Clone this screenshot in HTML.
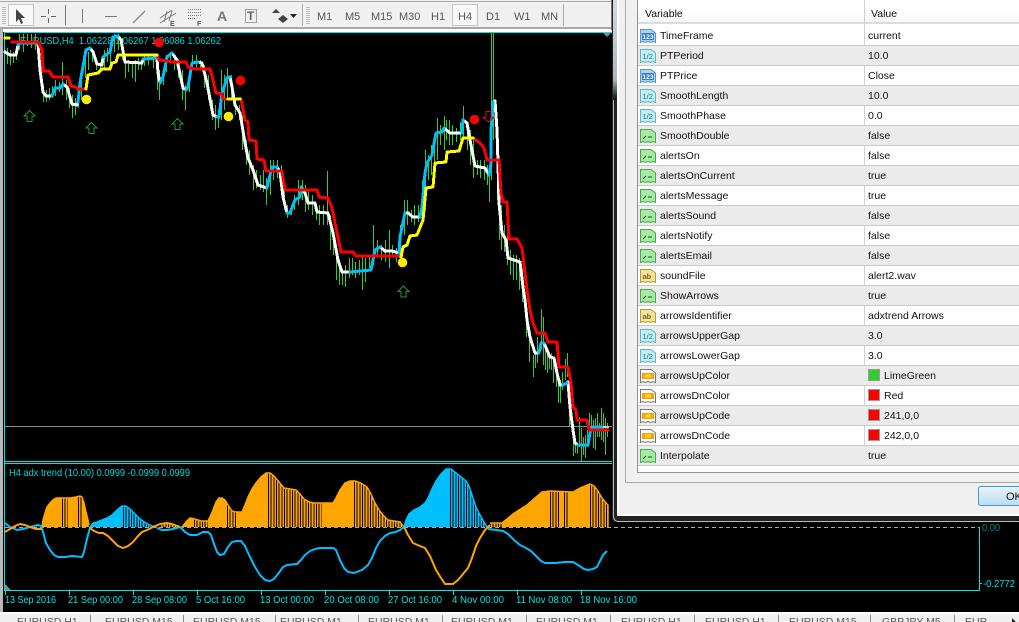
<!DOCTYPE html>
<html><head><meta charset="utf-8"><style>
html,body{margin:0;padding:0;width:1019px;height:622px;overflow:hidden;background:#000}
#c{position:absolute;left:0;top:0}
text{font-family:"Liberation Sans",sans-serif}
#d{position:absolute;left:638px;top:0;width:381px;height:472px;font:10.5px "Liberation Sans",sans-serif;color:#111;background:#fff;overflow:hidden}
.h{position:absolute;left:0;top:0;width:381px;height:24px;background:linear-gradient(#fff 40%,#f4f6f8);border-bottom:2px solid #dcdcdc;box-sizing:border-box}
.h span{position:absolute;top:8px}
.r{position:absolute;left:0;width:381px;height:20px;box-sizing:border-box;border-bottom:1px solid #c9c9c9;line-height:21px}
.g{background:#ebebeb}
.r svg{position:absolute;left:2px;top:2px}
.n{position:absolute;left:22px}
.v{position:absolute;left:230px}
.s{position:absolute;left:230px;top:3px;width:10px;height:10px;border:1px solid #999}
.t{position:absolute;left:246px}
.l{position:absolute;left:226px;top:0;width:1px;height:466px;background:#d0d0d0}
</style></head><body>
<svg id="c" width="1019" height="622" viewBox="0 0 1019 622">
<defs>
<clipPath id="ar"><path d="M42 527L43 520 45 513 47 507 50 503 53 500 56 498 62 498 70 498 76 497 80 496 82 497 84 503 86 512 88 520 89 527ZM90 527L93 523 97 522 102 520 107 518 112 515 117 510 122 506 126 506 130 509 135 514 140 519 146 523 152 526 157 527ZM160 527L160 526 164 524 167 523 172 524 177 527ZM182 527L186 522 190 518 195 519 201 521 208 521 210 517 213 510 216 502 219 498 222 498 225 500 228 505 232 511 236 512 242 512 245 505 248 497 252 489 256 483 261 477 266 473 270 473 274 476 279 482 284 488 290 489 296 490 300 494 304 499 309 502 314 503 322 503 333 503 336 498 340 490 345 483 350 481 355 481 361 483 367 487 371 494 375 503 379 510 383 515 388 520 394 521 400 522 404 527ZM404 527L406 520 409 514 414 510 420 507 425 503 428 498 432 489 436 481 441 474 446 469 451 469 456 473 461 477 466 481 469 486 472 495 476 507 480 515 484 522 487 527ZM490 527L490 523 502 523 507 519 513 514 519 510 527 505 535 498 542 492 550 491 573 492 580 488 590 484 594 486 598 491 602 498 606 503 608 505 608 527Z"/></clipPath>
<linearGradient id="fr" x1="0" x2="0" y1="0" y2="1"><stop offset="0" stop-color="#d4dce2"/><stop offset=".8" stop-color="#aab4ba"/><stop offset=".95" stop-color="#333"/><stop offset="1" stop-color="#111"/></linearGradient>
<linearGradient id="ok" x1="0" x2="0" y1="0" y2="1"><stop offset="0" stop-color="#e8f4fb"/><stop offset="1" stop-color="#bcdcee"/></linearGradient>
</defs>
<rect width="1019" height="622" fill="#000"/>
<!-- toolbar -->
<rect width="612" height="29" fill="#f0f0f0"/>
<rect y="1" width="612" height="1" fill="#a8a8a8"/>
<rect y="27" width="612" height="2" fill="#a8a8a8"/>
<rect y="29" width="612" height="3" fill="#fff"/>
<rect x="0" y="29" width="3" height="585" fill="#b8b8b8"/>
<path d="M2 7.500H6M2 9.500H6M2 11.500H6M2 13.500H6M2 15.500H6M2 17.500H6M2 19.500H6M2 21.500H6M2 23.500H6M306 7.500H310M306 9.500H310M306 11.500H310M306 13.500H310M306 15.500H310M306 17.500H310M306 19.500H310M306 21.500H310M306 23.500H310" stroke="#bbb" stroke-width="1"/>
<rect x="8.500" y="4.500" width="25" height="21" fill="#f8f8f8" stroke="#c4c4c4"/>
<path d="M16 9V22L19 19 21 24 23 23 21 18H25Z" fill="#444"/>
<path d="M48.500 9V14M48.500 18V23M41 16.500H46M51 16.500H56" stroke="#666" fill="none"/>
<path d="M65.500 5V25M82.500 9V23M105 16.500H117" stroke="#777" fill="none"/>
<path d="M133 23L145 11" stroke="#888" stroke-width="1.300" fill="none"/>
<path d="M160 18L172 10M160 23L176 13M164 22L167 11M169 21L172 11" stroke="#777" fill="none"/>
<text x="170" y="26" font-size="7" font-weight="bold" fill="#555">E</text>
<path d="M188 9.500H202M188 12.500H202M188 15.500H202M188 18.500H196" stroke="#777" stroke-dasharray="1 1" fill="none"/>
<text x="197" y="26" font-size="7" font-weight="bold" fill="#555">F</text>
<text x="217" y="21" font-size="14" font-weight="bold" fill="#777">A</text>
<rect x="245.500" y="9.500" width="11" height="13" fill="none" stroke="#555" stroke-dasharray="1 1"/>
<text x="247" y="20" font-size="12" font-weight="bold" fill="#666">T</text>
<path d="M272 13L276 9 280 13ZM278 19L283 15 288 19 283 23Z" fill="#444"/>
<path d="M290 14H297L293.500 18Z" fill="#222"/>
<path d="M302.500 4V26M563.500 4V26" stroke="#aaa" fill="none"/>
<rect x="452.500" y="4.500" width="25" height="21" fill="#f8f8f8" stroke="#c4c4c4"/>
<g font-size="11" fill="#555">
<text x="317" y="20">M1</text><text x="345" y="20">M5</text><text x="371" y="20">M15</text><text x="399" y="20">M30</text><text x="431" y="20">H1</text><text x="458" y="20">H4</text><text x="486" y="20">D1</text><text x="514" y="20">W1</text><text x="541" y="20">MN</text>
</g>
<!-- frames -->
<path d="M4.500 32.500H612M4.500 32V590.500H979.500V527M5 461.500H612M5 463.500H612" stroke="#00e5e5" fill="none"/>
<rect x="5" y="426" width="607" height="1" fill="#7f8f99"/>
<path d="M603 33H611L607 37Z" fill="#888"/>
<path d="M5 584L11 590H5Z" fill="#888"/>
<text x="20" y="44" font-size="10.500" fill="#00d8d8" textLength="201" lengthAdjust="spacingAndGlyphs" style="white-space:pre">EURUSD,H4  1.06228 1.06267 1.06086 1.06262</text>
<!-- wicks -->
<path transform="translate(.5 0)" stroke="#32cd32" fill="none" d="M7 48V64M10 50V65M13 52V63M16 48V60M19 34V50M23 34V52M27 34V46M31 34V48M35 34V50M41 60V90M43 85V102M46 90V102M49 88V100M52 86V98M55 80V96M59 82V92M62 62V95M66 80V100M69 88V108M72 95V118M75 98V115M78 95V108M81 75V100M85 55V78M88 52V70M92 52V62M96 60V70M100 62V72M104 50V70M107 48V62M110 42V66M114 34V52M118 34V50M122 38V60M125 55V78M128 60V72M132 62V78M135 60V82M138 58V70M141 60V70M144 55V66M148 55V65M153 55V68M157 65V90M159 70V100M163 70V85M166 55V72M170 52V62M174 55V70M178 60V78M182 70V100M185 85V110M189 80V92M192 55V70M196 55V68M200 60V70M204 65V88M208 75V100M212 100V120M215 105V130M218 110V128M221 70V120M224 75V110M227 68V98M231 75V100M235 100V115M239 105V120M242 115V150M246 140V165M249 150V175M253 165V190M256 170V188M260 175V190M263 170V192M266 178V205M270 160V195M273 160V180M277 160V178M281 165V185M284 180V210M287 205V218M291 205V215M294 195V210M298 180V205M302 180V200M305 185V212M308 190V210M312 195V215M316 208V220M319 205V225M323 205V225M327 171V225M330 215V250M333 235V255M336 250V280M339 260V285M342 270V285M345 265V287M349 258V278M352 258V275M355 262V278M359 260V275M362 255V290M365 258V282M369 255V268M373 225V265M377 240V255M381 245V260M385 240V262M389 230V268M392 245V255M396 248V262M400 225V255M404 200V235M407 200V225M411 210V222M414 205V225M418 205V222M422 180V215M425 150V210M428 155V180M431 145V175M434 140V170M437 118V160M440 125V145M444 116V150M446 120V140M449 120V145M452 125V145M456 128V142M460 122V140M463 106V140M467 125V150M470 130V165M473 140V178M477 160V175M480 160V178M484 160V180M487 165V185M489 170V202M491 32V180M493 32V140M497 130V200M499 190V240M501 205V250M504 225V252M507 235V265M510 250V275M513 255V280M516 255V280M519 258V290M522 270V302M526 318V337M529 337V362M533 355V377M535 353V368M537 337V363M541 309V350M543 317V365M545 343V370M547 353V373M549 358V369M551 353V370M553 357V383M556 370V387M558 377V403M560 380V403M562 372V390M565 359V380M567 353V377M569 410V427M573 427V456M575 440V453M577 443V454M579 417V447M581 428V461M583 437V455M585 435V458M587 430V447M589 413V437M591 415V427M593 420V448M595 418V450M597 413V437M599 423V437M601 408V440M603 413V442M605 418V455M607 423V437"/>
<!-- white -->
<path shape-rendering="crispEdges" fill="none" stroke="#fff" stroke-width="3" stroke-linejoin="round" stroke-linecap="round" d="M5 52L10 55 16 55 18 45 20 43 38 43 40 70 43 92 46 96 52 96 55 88 60 88 63 84 67 87 72 104 77 105 78 102 80 83 86 50 90 48 93 52 97 64 102 65 103 57 110 52 113 37 118 36 121 40 125 62 142 63 143 59 157 58 158 73 160 83 163 77 167 57 172 53 177 60 183 88 186 90 188 87 192 63 198 62 202 63 207 83 213 115 217 117 219 117 222 93 227 78 230 77 232 87 235 105 240 113 245 143 248 158 253 170 258 185 267 188 268 183 272 167 277 167 280 172 283 197 287 213 290 213 295 200 300 197 301 187 305 193 308 203 315 203 317 212 328 213 333 233 338 260 342 272 350 272 371 270 375 250 380 247 385 251 392 251 399 253 400 237 405 213 408 213 413 217 420 217 422 207 425 173 427 163 432 155 436 133 442 132 444 128 450 133 462 133 463 120 467 123 470 140 475 166 485 168 489 175 491 163 491 130 493 102 495 101 497 130 498 163 499 203 502 233 506 240 508 258 520 262 523 287 525 300 527 320 530 337 535 353 539 353 541 343 544 343 547 350 550 357 554 358 557 373 560 385 563 385 567 383 568 382 570 407 573 430 575 443 578 445"/>
<!-- blue -->
<path shape-rendering="crispEdges" fill="none" stroke="#00bfff" stroke-width="3" stroke-linejoin="round" stroke-linecap="round" d="M18 45L20 43 38 43M52 96L55 88 60 88 63 84M78 102L80 83 86 50 90 48M103 57L110 52 113 37 118 36M143 59L157 58M160 83L163 77 167 57 172 53M186 90L188 87 192 63 198 62M217 117L219 117 222 93 227 78 230 77M267 188L268 183 272 167 277 167M287 213L290 213 295 200 300 197 301 187M350 272L371 270 375 250 380 247M399 253L400 237 405 213M420 217L422 207 425 173 427 163 432 155 436 133 442 132 444 128M462 133L463 120M489 175L491 163 491 130 493 102M539 353L541 343 544 343M563 385L567 383M578 445L588 445 590 433 592 427 603 427"/>
<path d="M603 426H609V428H603Z" fill="#ccc"/>
<!-- red -->
<path shape-rendering="crispEdges" fill="none" stroke="#f00" stroke-width="3" stroke-linejoin="round" stroke-linecap="round" d="M12 42L38 42 42 50 43 71 49 71 53 77 68 77 71 86 76 87 78 89 86 89M157 55L159 60 168 61 171 62 186 62 188 67 194 69 210 69 213 80 216 93 222 94 223 99 228 99M241 99L245 120 248 122 249 140 256 141 257 159 264 160 266 171 282 171 285 190 317 190 319 197 328 198 332 208 341 252 353 252 356 256 402 256M473 138L480 143 484 148 487 160 499 160 501 193 503 202 507 202 509 239 517 239 522 248 527 290 530 310 533 323 537 333 545 333 548 342 557 342 559 367 568 367 571 383 573 407 576 410 577 420 587 420 589 430 608 430"/>
<!-- yellow -->
<path shape-rendering="crispEdges" fill="none" stroke="#ff0" stroke-width="3" stroke-linejoin="round" stroke-linecap="round" d="M86 89L88 75 98 73 102 69 110 69 112 63 116 62 118 55 157 55M228 99L240 99M401 257L403 247 407 245 410 236 417 235 423 220 426 188 433 187 435 163 446 162 447 152 459 151 463 138 473 138M5 38H9"/>
<!-- markers -->
<g fill="#ffeb00"><circle cx="86.500" cy="99.500" r="4.800"/><circle cx="228.500" cy="116.500" r="4.800"/><circle cx="402.500" cy="262.500" r="4.800"/></g>
<g fill="#f00"><circle cx="159" cy="42.500" r="4.800"/><circle cx="240.500" cy="80.500" r="4.800"/><circle cx="474.500" cy="119.500" r="4.800"/></g>
<g fill="none" stroke="#1f9a2a" shape-rendering="crispEdges"><path d="M29.500 110.500L35 116H32V121.500H27V116H24Z"/><path d="M91.500 122.500L97 128H94V133.500H89V128H86Z"/><path d="M177.500 118.500L183 124H180V129.500H175V124H172Z"/><path d="M403.500 286L409 291.500H406V297H401V291.500H398Z"/></g>
<path shape-rendering="crispEdges" fill="none" stroke="#d01010" d="M486 111.500H491V117.500H494L488.500 122 483 117.500H486Z"/>
<!-- histogram -->
<path fill="#ffa500" d="M42 527L43 520 45 513 47 507 50 503 53 500 56 498 62 498 70 498 76 497 80 496 82 497 84 503 86 512 88 520 89 527ZM160 527L160 526 164 524 167 523 172 524 177 527ZM182 527L186 522 190 518 195 519 201 521 208 521 210 517 213 510 216 502 219 498 222 498 225 500 228 505 232 511 236 512 242 512 245 505 248 497 252 489 256 483 261 477 266 473 270 473 274 476 279 482 284 488 290 489 296 490 300 494 304 499 309 502 314 503 322 503 333 503 336 498 340 490 345 483 350 481 355 481 361 483 367 487 371 494 375 503 379 510 383 515 388 520 394 521 400 522 404 527ZM490 527L490 523 502 523 507 519 513 514 519 510 527 505 535 498 542 492 550 491 573 492 580 488 590 484 594 486 598 491 602 498 606 503 608 505 608 527Z"/>
<path fill="#00bfff" d="M90 527L93 523 97 522 102 520 107 518 112 515 117 510 122 506 126 506 130 509 135 514 140 519 146 523 152 526 157 527ZM404 527L406 520 409 514 414 510 420 507 425 503 428 498 432 489 436 481 441 474 446 469 451 469 456 473 461 477 466 481 469 486 472 495 476 507 480 515 484 522 487 527Z"/>
<g clip-path="url(#ar)"><path shape-rendering="crispEdges" stroke="#000" stroke-width="70" stroke-dasharray="1 1.667" fill="none" d="M62 495H68M78 495H83M123 495H157M160 495H177M194 495H208M227 495H237M268 495H322M354 495H403M450 495H487M490 495H502M550 495H560M564 495H569M590 495H608"/></g>
<path fill="none" stroke="#ffa500" stroke-width="1.500" d="M42 527L43 520 45 513 47 507 50 503 53 500 56 498 62 498 70 498 76 497 80 496 82 497 84 503 86 512 88 520 89 525M182 527L186 522 190 518 195 519 201 521 208 521 210 517 213 510 216 502 219 498 222 498 225 500 228 505 232 511 236 512 242 512 245 505 248 497 252 489 256 483 261 477 266 473 270 473 274 476 279 482 284 488 290 489 296 490 300 494 304 499 309 502 314 503 322 503 333 503 336 498 340 490 345 483 350 481 355 481 361 483 367 487 371 494 375 503 379 510 383 515 388 520 394 521 400 522 404 527M490 523L502 523 507 519 513 514 519 510 527 505 535 498 542 492 550 491 573 492 580 488 590 484 594 486 598 491 602 498 606 503 608 505V527"/>
<path fill="none" stroke="#00bfff" stroke-width="1.500" d="M90 527L93 523 97 522 102 520 107 518 112 515 117 510 122 506 126 506 130 509 135 514 140 519 146 523 152 526 157 527M404 527L406 520 409 514 414 510 420 507 425 503 428 498 432 489 436 481 441 474 446 469 451 469 456 473 461 477 466 481 469 486 472 495 476 507 480 515 484 522 487 527"/>
<path d="M5 527.500H979" stroke="#aaa" stroke-dasharray="4 3" fill="none"/>
<!-- indicator lines -->
<path fill="none" stroke="#00bfff" stroke-width="2" stroke-linejoin="round" d="M5 523L10 527 17 530 23 529 30 527 38 525 41 526 43 532 46 543 50 550 54 555 58 557 65 557 72 556 82 557 84 552 86 543 88 535 90 528M157 528L162 530 167 530 173 529 180 527 185 532 190 535 197 535 203 532 208 532 211 535 214 544 217 552 220 555 224 554 228 547 232 542 237 541 241 541 245 546 250 557 255 567 260 575 265 580 270 581 274 579 278 574 283 567 287 565 297 564 301 560 305 555 310 551 315 549 320 548 333 548 336 550 340 560 344 568 348 572 354 573 362 570 368 565 372 558 376 548 380 541 385 536 390 533 396 532 400 530 404 527M488 529L497 530 503 531 508 534 514 540 520 545 526 548 531 551 536 556 541 561 545 563 555 563 565 562 573 562 578 565 584 569 588 570 593 569 597 567 600 561 603 555 607 551"/>
<path fill="none" stroke="#ffa500" stroke-width="2" stroke-linejoin="round" d="M5 532L10 529 15 526 20 524 25 525 30 527 36 529 42 529M90 528L94 531 99 533 103 533 108 536 113 541 118 546 123 548 128 546 133 542 138 536 142 532 147 530 153 527 160 524 167 523 172 524 180 527M404 527L408 535 413 543 420 546 425 548 430 556 436 570 441 578 445 584 453 584 458 580 463 574 468 568 472 558 476 546 480 538 485 530 490 525"/>
<text x="9" y="476" font-size="10.500" fill="#00d8d8" textLength="181" lengthAdjust="spacingAndGlyphs">H4 adx trend (10.00) 0.0999 -0.0999 0.0999</text>
<path d="M5.500 591V595M69.500 591V595M133.500 591V595M197.500 591V595M261.500 591V595M325.500 591V595M389.500 591V595M453.500 591V595M517.500 591V595M581.500 591V595" stroke="#00e5e5" fill="none"/>
<g font-size="10.500" fill="#00e5e5">
<text x="5" y="603" textLength="51" lengthAdjust="spacingAndGlyphs">13 Sep 2016</text><text x="68" y="603" textLength="55" lengthAdjust="spacingAndGlyphs">21 Sep 00:00</text><text x="132" y="603" textLength="55" lengthAdjust="spacingAndGlyphs">28 Sep 08:00</text><text x="196" y="603" textLength="49" lengthAdjust="spacingAndGlyphs">5 Oct 16:00</text><text x="260" y="603" textLength="54" lengthAdjust="spacingAndGlyphs">13 Oct 00:00</text><text x="324" y="603" textLength="55" lengthAdjust="spacingAndGlyphs">20 Oct 08:00</text><text x="388" y="603" textLength="54" lengthAdjust="spacingAndGlyphs">27 Oct 16:00</text><text x="452" y="603" textLength="52" lengthAdjust="spacingAndGlyphs">4 Nov 00:00</text><text x="516" y="603" textLength="56" lengthAdjust="spacingAndGlyphs">11 Nov 08:00</text><text x="580" y="603" textLength="57" lengthAdjust="spacingAndGlyphs">18 Nov 16:00</text>
<text x="982" y="531" fill="#008f8f" textLength="18" lengthAdjust="spacingAndGlyphs">0.00</text><text x="983" y="587" textLength="32" lengthAdjust="spacingAndGlyphs">-0.2772</text>
</g>
<path d="M979 583.500H982" stroke="#00e5e5"/>
<!-- tabs -->
<rect y="612" width="1019" height="2" fill="#fff"/>
<rect y="614" width="1019" height="8" fill="#f0f0f0"/>
<path d="M90.500 615V622M183.500 615V622M275.500 615V622M358.500 615V622M442.500 615V622M526.500 615V622M610.500 615V622M694.500 615V622M778.500 615V622M870.500 615V622M954.500 615V622" stroke="#888"/>
<g font-size="10.500" fill="#555">
<text x="17" y="625">EURUSD H1</text><text x="105" y="625">EURUSD M15</text><text x="193" y="625">EURUSD M15</text><text x="280" y="625">EURUSD M1</text><text x="368" y="625">EURUSD M1</text><text x="451" y="625">EURUSD M1</text><text x="536" y="625">EURUSD M1</text><text x="621" y="625">EURUSD H1</text><text x="705" y="625">EURUSD H1</text><text x="789" y="625">EURUSD M15</text><text x="882" y="625">GBPJPY M5</text><text x="965" y="625">EUR</text>
</g>
<path d="M1012 618L1016 622H1012Z" fill="#222"/>
<!-- dialog frame -->
<rect x="612" y="0" width="407" height="522" rx="4" fill="#222"/>
<rect x="613" y="0" width="4" height="100" fill="url(#fr)"/>
<path d="M613.500 100V516Q613.500 521.500 619 521.500H1019" stroke="#bbb" fill="none"/>
<rect x="611" y="0" width="1" height="30" fill="#777"/>
<rect x="617" y="0" width="402" height="516" fill="#fff"/>
<rect x="619" y="0" width="400" height="514" fill="#f0f0f0"/>
<path d="M625.500 0V482.500H1019" stroke="#a8a8a8" fill="none"/>
<path d="M637.500 0V472.500H1019" stroke="#8c96a0" fill="none"/>
<rect x="978.500" y="486.500" width="50" height="19" rx="2" fill="url(#ok)" stroke="#3c9ed0"/>
<text x="1006" y="500" font-size="11" fill="#111">OK</text>
</svg>
<div id="d">
<div class="h"><span style="left:7px">Variable</span><span style="left:233px">Value</span></div>
<div class="l"></div>
<div class="r" style="top:26px"><svg width="16" height="16"><path d="M.5 1.500H11L15.500 5V14.500L13 13.500 10.500 14.500 8 13.500 5.500 14.500 3 13.500.5 14.500Z" fill="#a9d3f2" stroke="#5b93c4"/><rect x="2" y="5" width="12" height="7" fill="#3a7fc0"/><text x="2.500" y="11" font-size="6.500" font-weight="bold" fill="#fff" textLength="11" lengthAdjust="spacingAndGlyphs">123</text></svg><span class="n">TimeFrame</span><span class="v">current</span></div>
<div class="r g" style="top:46px"><svg width="16" height="16"><path d="M.5 1.500H11L15.500 5V14.500L13 13.500 10.500 14.500 8 13.500 5.500 14.500 3 13.500.5 14.500Z" fill="#c0eef2" stroke="#5fb6c4"/><text x="2.500" y="11" font-size="7.500" fill="#1d6c88">1/2</text></svg><span class="n">PTPeriod</span><span class="v">10.0</span></div>
<div class="r" style="top:66px"><svg width="16" height="16"><path d="M.5 1.500H11L15.500 5V14.500L13 13.500 10.500 14.500 8 13.500 5.500 14.500 3 13.500.5 14.500Z" fill="#a9d3f2" stroke="#5b93c4"/><rect x="2" y="5" width="12" height="7" fill="#3a7fc0"/><text x="2.500" y="11" font-size="6.500" font-weight="bold" fill="#fff" textLength="11" lengthAdjust="spacingAndGlyphs">123</text></svg><span class="n">PTPrice</span><span class="v">Close</span></div>
<div class="r g" style="top:86px"><svg width="16" height="16"><path d="M.5 1.500H11L15.500 5V14.500L13 13.500 10.500 14.500 8 13.500 5.500 14.500 3 13.500.5 14.500Z" fill="#c0eef2" stroke="#5fb6c4"/><text x="2.500" y="11" font-size="7.500" fill="#1d6c88">1/2</text></svg><span class="n">SmoothLength</span><span class="v">10.0</span></div>
<div class="r" style="top:106px"><svg width="16" height="16"><path d="M.5 1.500H11L15.500 5V14.500L13 13.500 10.500 14.500 8 13.500 5.500 14.500 3 13.500.5 14.500Z" fill="#c0eef2" stroke="#5fb6c4"/><text x="2.500" y="11" font-size="7.500" fill="#1d6c88">1/2</text></svg><span class="n">SmoothPhase</span><span class="v">0.0</span></div>
<div class="r g" style="top:126px"><svg width="16" height="16"><path d="M.5 1.500H11L15.500 5V14.500L13 13.500 10.500 14.500 8 13.500 5.500 14.500 3 13.500.5 14.500Z" fill="#a6e8a6" stroke="#4da84d"/><path d="M3 11L6 8M8 9H12" stroke="#145a14" fill="none"/></svg><span class="n">SmoothDouble</span><span class="v">false</span></div>
<div class="r" style="top:146px"><svg width="16" height="16"><path d="M.5 1.500H11L15.500 5V14.500L13 13.500 10.500 14.500 8 13.500 5.500 14.500 3 13.500.5 14.500Z" fill="#a6e8a6" stroke="#4da84d"/><path d="M3 11L6 8M8 9H12" stroke="#145a14" fill="none"/></svg><span class="n">alertsOn</span><span class="v">false</span></div>
<div class="r g" style="top:166px"><svg width="16" height="16"><path d="M.5 1.500H11L15.500 5V14.500L13 13.500 10.500 14.500 8 13.500 5.500 14.500 3 13.500.5 14.500Z" fill="#a6e8a6" stroke="#4da84d"/><path d="M3 11L6 8M8 9H12" stroke="#145a14" fill="none"/></svg><span class="n">alertsOnCurrent</span><span class="v">true</span></div>
<div class="r" style="top:186px"><svg width="16" height="16"><path d="M.5 1.500H11L15.500 5V14.500L13 13.500 10.500 14.500 8 13.500 5.500 14.500 3 13.500.5 14.500Z" fill="#a6e8a6" stroke="#4da84d"/><path d="M3 11L6 8M8 9H12" stroke="#145a14" fill="none"/></svg><span class="n">alertsMessage</span><span class="v">true</span></div>
<div class="r g" style="top:206px"><svg width="16" height="16"><path d="M.5 1.500H11L15.500 5V14.500L13 13.500 10.500 14.500 8 13.500 5.500 14.500 3 13.500.5 14.500Z" fill="#a6e8a6" stroke="#4da84d"/><path d="M3 11L6 8M8 9H12" stroke="#145a14" fill="none"/></svg><span class="n">alertsSound</span><span class="v">false</span></div>
<div class="r" style="top:226px"><svg width="16" height="16"><path d="M.5 1.500H11L15.500 5V14.500L13 13.500 10.500 14.500 8 13.500 5.500 14.500 3 13.500.5 14.500Z" fill="#a6e8a6" stroke="#4da84d"/><path d="M3 11L6 8M8 9H12" stroke="#145a14" fill="none"/></svg><span class="n">alertsNotify</span><span class="v">false</span></div>
<div class="r g" style="top:246px"><svg width="16" height="16"><path d="M.5 1.500H11L15.500 5V14.500L13 13.500 10.500 14.500 8 13.500 5.500 14.500 3 13.500.5 14.500Z" fill="#a6e8a6" stroke="#4da84d"/><path d="M3 11L6 8M8 9H12" stroke="#145a14" fill="none"/></svg><span class="n">alertsEmail</span><span class="v">false</span></div>
<div class="r" style="top:266px"><svg width="16" height="16"><path d="M.5 1.500H11L15.500 5V14.500L13 13.500 10.500 14.500 8 13.500 5.500 14.500 3 13.500.5 14.500Z" fill="#f2e29a" stroke="#b59a3c"/><text x="2.500" y="11" font-size="7.500" font-weight="bold" fill="#7a5f10">ab</text></svg><span class="n">soundFile</span><span class="v">alert2.wav</span></div>
<div class="r g" style="top:286px"><svg width="16" height="16"><path d="M.5 1.500H11L15.500 5V14.500L13 13.500 10.500 14.500 8 13.500 5.500 14.500 3 13.500.5 14.500Z" fill="#a6e8a6" stroke="#4da84d"/><path d="M3 11L6 8M8 9H12" stroke="#145a14" fill="none"/></svg><span class="n">ShowArrows</span><span class="v">true</span></div>
<div class="r" style="top:306px"><svg width="16" height="16"><path d="M.5 1.500H11L15.500 5V14.500L13 13.500 10.500 14.500 8 13.500 5.500 14.500 3 13.500.5 14.500Z" fill="#f2e29a" stroke="#b59a3c"/><text x="2.500" y="11" font-size="7.500" font-weight="bold" fill="#7a5f10">ab</text></svg><span class="n">arrowsIdentifier</span><span class="v">adxtrend Arrows</span></div>
<div class="r g" style="top:326px"><svg width="16" height="16"><path d="M.5 1.500H11L15.500 5V14.500L13 13.500 10.500 14.500 8 13.500 5.500 14.500 3 13.500.5 14.500Z" fill="#c0eef2" stroke="#5fb6c4"/><text x="2.500" y="11" font-size="7.500" fill="#1d6c88">1/2</text></svg><span class="n">arrowsUpperGap</span><span class="v">3.0</span></div>
<div class="r" style="top:346px"><svg width="16" height="16"><path d="M.5 1.500H11L15.500 5V14.500L13 13.500 10.500 14.500 8 13.500 5.500 14.500 3 13.500.5 14.500Z" fill="#c0eef2" stroke="#5fb6c4"/><text x="2.500" y="11" font-size="7.500" fill="#1d6c88">1/2</text></svg><span class="n">arrowsLowerGap</span><span class="v">3.0</span></div>
<div class="r g" style="top:366px"><svg width="16" height="16"><path d="M.5 1.500H11L15.500 5V14.500L13 13.500 10.500 14.500 8 13.500 5.500 14.500 3 13.500.5 14.500Z" fill="#fff" stroke="#777"/><rect x="2" y="5" width="12" height="6" fill="#ff9a1a"/><rect x="5" y="6.500" width="6" height="3" fill="#ffe000"/></svg><span class="n">arrowsUpColor</span><span class="s" style="background:#32cd32"></span><span class="t">LimeGreen</span></div>
<div class="r" style="top:386px"><svg width="16" height="16"><path d="M.5 1.500H11L15.500 5V14.500L13 13.500 10.500 14.500 8 13.500 5.500 14.500 3 13.500.5 14.500Z" fill="#fff" stroke="#777"/><rect x="2" y="5" width="12" height="6" fill="#ff9a1a"/><rect x="5" y="6.500" width="6" height="3" fill="#ffe000"/></svg><span class="n">arrowsDnColor</span><span class="s" style="background:#f00"></span><span class="t">Red</span></div>
<div class="r g" style="top:406px"><svg width="16" height="16"><path d="M.5 1.500H11L15.500 5V14.500L13 13.500 10.500 14.500 8 13.500 5.500 14.500 3 13.500.5 14.500Z" fill="#fff" stroke="#777"/><rect x="2" y="5" width="12" height="6" fill="#ff9a1a"/><rect x="5" y="6.500" width="6" height="3" fill="#ffe000"/></svg><span class="n">arrowsUpCode</span><span class="s" style="background:#f00"></span><span class="t">241,0,0</span></div>
<div class="r" style="top:426px"><svg width="16" height="16"><path d="M.5 1.500H11L15.500 5V14.500L13 13.500 10.500 14.500 8 13.500 5.500 14.500 3 13.500.5 14.500Z" fill="#fff" stroke="#777"/><rect x="2" y="5" width="12" height="6" fill="#ff9a1a"/><rect x="5" y="6.500" width="6" height="3" fill="#ffe000"/></svg><span class="n">arrowsDnCode</span><span class="s" style="background:#f00"></span><span class="t">242,0,0</span></div>
<div class="r g" style="top:446px"><svg width="16" height="16"><path d="M.5 1.500H11L15.500 5V14.500L13 13.500 10.500 14.500 8 13.500 5.500 14.500 3 13.500.5 14.500Z" fill="#a6e8a6" stroke="#4da84d"/><path d="M3 11L6 8M8 9H12" stroke="#145a14" fill="none"/></svg><span class="n">Interpolate</span><span class="v">true</span></div>
</div>
</body></html>
